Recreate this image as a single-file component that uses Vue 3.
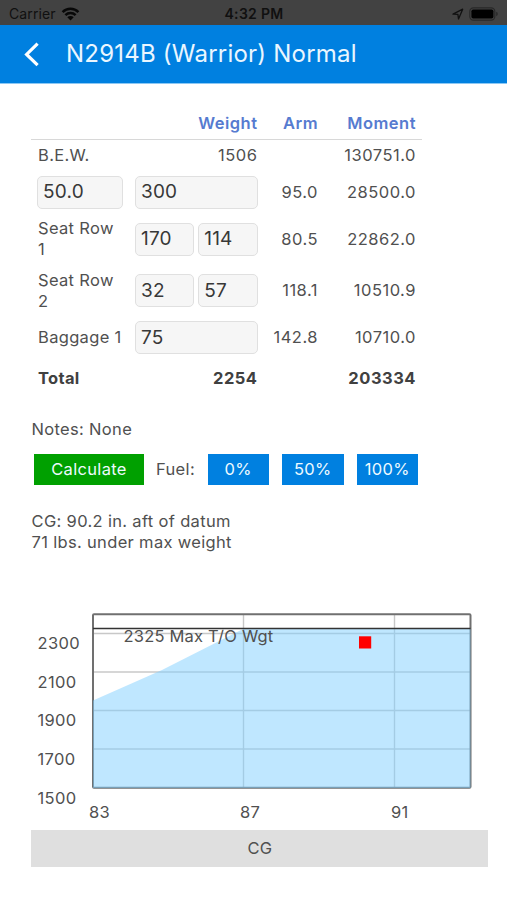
<script setup>
import { ref } from 'vue'

const rows = ref([
  { h: 42, label: '', fuel: '50.0', inputs: ['300'], arm: '95.0', moment: '28500.0' },
  { h: 52, label: 'Seat Row 1', inputs: ['170', '114'], arm: '80.5', moment: '22862.0' },
  { h: 51, label: 'Seat Row 2', inputs: ['32', '57'], arm: '118.1', moment: '10510.9' },
  { h: 43, label: 'Baggage 1', inputs: ['75'], arm: '142.8', moment: '10710.0' },
])
const fuelLevels = ['0%', '50%', '100%']
const weights = [
  { t: '2300', y: 49.2, grid: 33.5 },
  { t: '2100', y: 87.8, grid: 72 },
  { t: '1900', y: 126.4, grid: 110.5 },
  { t: '1700', y: 165, grid: 149 },
  { t: '1500', y: 203.6 },
]
const arms = [
  { t: '83', x: 58 },
  { t: '87', x: 209, grid: 212.5 },
  { t: '91', x: 360, grid: 363.5 },
]
</script>

<template>
  <div class="screen">
    <div class="status">
      <div class="carrier">
        <span>Carrier</span>
        <svg class="wifi" width="19" height="14" viewBox="0 0 19 14">
          <path d="M1.6 5.1a11.2 11.2 0 0 1 15.8 0" />
          <path d="M4.4 8.1a7.2 7.2 0 0 1 10.2 0" />
          <path class="solid" d="M6.3 10.3a4.6 4.6 0 0 1 6.4 0L9.5 13.5z" />
        </svg>
      </div>
      <span class="clock">4:32 PM</span>
      <div class="indicators">
        <svg width="12" height="12" viewBox="0 0 12 12">
          <path class="arrow" d="M1 6.2 10.7 1.2 6.5 11 5.9 6.4z" />
        </svg>
        <svg width="30" height="14" viewBox="0 0 30 14">
          <rect class="shell" x="0.8" y="0.8" width="25" height="12.4" rx="3.6" />
          <rect class="charge" x="2.4" y="2.4" width="22" height="9.2" rx="1.8" />
          <path class="cap" d="M27.2 4.8q1.6.6 1.6 2.2t-1.6 2.2z" />
        </svg>
      </div>
    </div>

    <header class="bar">
      <svg class="back" width="18" height="26" viewBox="0 0 18 26">
        <path d="M13.6 2.6 2.6 13.4 13.6 24.2" />
      </svg>
      <h1>N2914B (Warrior) Normal</h1>
    </header>

    <main>
      <div class="sheet">
        <div class="row head">
          <span></span><span class="num">Weight</span><span class="num">Arm</span><span class="num">Moment</span>
        </div>
        <div class="row bew">
          <span class="label">B.E.W.</span><span class="num">1506</span><span></span><span class="num">130751.0</span>
        </div>
        <div v-for="r in rows" :key="r.moment" class="row" :style="{ height: r.h + 'px' }">
          <input v-if="r.fuel" v-model="r.fuel" class="fuel" />
          <span v-else class="label">{{ r.label }}</span>
          <div class="fields">
            <input v-for="(v, i) in r.inputs" :key="i" v-model="r.inputs[i]" />
          </div>
          <span class="num">{{ r.arm }}</span>
          <span class="num">{{ r.moment }}</span>
        </div>
        <div class="row total">
          <span class="label">Total</span><span class="num">2254</span><span></span><span class="num">203334</span>
        </div>
      </div>

      <p class="notes">Notes: None</p>

      <div class="actions">
        <button class="calc">Calculate</button>
        <span class="fuel-label">Fuel:</span>
        <button v-for="f in fuelLevels" :key="f" class="level">{{ f }}</button>
      </div>

      <p class="result">CG: 90.2 in. aft of datum<br />71 lbs. under max weight</p>

      <svg class="chart" width="457" height="230" viewBox="0 0 457 230">
        <g class="grid">
          <template v-for="w in weights" :key="w.t">
            <path v-if="w.grid" :d="`M62 ${w.grid}H439.5`" />
          </template>
          <template v-for="a in arms" :key="a.t">
            <path v-if="a.grid" :d="`M${a.grid} 14V188`" />
          </template>
        </g>
        <rect class="frame" x="62" y="14.2" width="377.5" height="173.6" rx="1" />
        <path class="envelope" d="M62 100.5 131 70 212 29H439.5V188H62z" />
        <path class="limit" d="M62 28.5H439.5" />
        <text class="limit-text" x="92.5" y="42.4">2325 Max T/O Wgt</text>
        <rect class="point" x="328" y="36.3" width="12.2" height="12.2" />
        <text v-for="w in weights" :key="w.t" x="6.5" :y="w.y">{{ w.t }}</text>
        <text v-for="a in arms" :key="a.t" :x="a.x" y="218.2">{{ a.t }}</text>
      </svg>
      <div class="axis">CG</div>
    </main>
  </div>
</template>

<style>
body {
  background: #fff;
}
</style>

<style scoped>
.screen {
  width: 507px;
  height: 900px;
  overflow: hidden;
  background: #fff;
  color: #505050;
  font: 16.5px/21px Inter, "Liberation Sans", sans-serif;
  letter-spacing: 0.33px;
}
.status {
  box-sizing: border-box;
  height: 25px;
  padding: 2px 8px 0 9px;
  display: grid;
  grid-template-columns: 1fr auto 1fr;
  align-items: center;
  background: #424242;
  color: #101010;
  font-size: 14px;
}
.carrier,
.indicators {
  display: flex;
  align-items: center;
}
.carrier {
  gap: 5px;
  letter-spacing: 0.1px;
}
.wifi path {
  fill: none;
  stroke: #080808;
  stroke-width: 2.5;
}
.wifi .solid {
  fill: #080808;
  stroke: none;
}
.clock {
  font-weight: 600;
  letter-spacing: 0.3px;
}
.indicators {
  justify-content: flex-end;
  gap: 5px;
}
.arrow {
  fill: none;
  stroke: #111;
  stroke-width: 1.3;
  stroke-linejoin: round;
}
.shell {
  fill: none;
  stroke: #292929;
  stroke-width: 1.2;
}
.charge {
  fill: #000;
}
.cap {
  fill: #292929;
}
.bar {
  box-sizing: border-box;
  height: 59px;
  display: flex;
  align-items: center;
  gap: 24px;
  padding: 0 0 1px 24px;
  background: #0080e0;
  border-bottom: 1px solid #8cc8f4;
}
.back {
  fill: none;
  stroke: #fff;
  stroke-width: 3.2;
}
h1 {
  margin: 0;
  color: #eaf6ff;
  font-size: 24px;
  font-weight: 400;
  line-height: 30px;
  letter-spacing: 0.22px;
}
main {
  display: flex;
  flex-direction: column;
  align-items: flex-start;
  padding: 23px 0 0 31px;
}
p {
  margin: 0;
}
.sheet {
  width: 391px;
}
.row {
  box-sizing: border-box;
  display: grid;
  grid-template-columns: 86px 122.5px 48.5px 86px;
  column-gap: 12px;
  align-items: center;
  padding: 0 6px 0 6px;
}
.head {
  height: 33px;
  border-bottom: 1px solid #d8d8d8;
  color: #567bd0;
  font-weight: 600;
}
.bew {
  height: 31px;
}
.total {
  height: 39px;
  color: #404040;
  font-weight: 700;
}
.num {
  text-align: right;
  white-space: nowrap;
  letter-spacing: 0.5px;
}
.label {
  padding-left: 1px;
}
.fields {
  display: flex;
  gap: 4px;
}
input {
  box-sizing: border-box;
  flex: 1;
  min-width: 0;
  width: 100%;
  height: 33px;
  margin: 0;
  padding: 0 5px 1px;
  border: 1px solid #e0e0e0;
  border-radius: 5px;
  background: #f6f6f6;
  color: #383838;
  font: 19px Inter, "Liberation Sans", sans-serif;
  letter-spacing: 0.2px;
  outline: none;
}
.notes {
  margin: 20.5px 0 0 0.5px;
}
.actions {
  display: flex;
  align-items: center;
  height: 31px;
  margin: 14.5px 0 0 3px;
}
button {
  height: 31px;
  margin: 0;
  padding: 0;
  border: 0;
  color: #eefaff;
  font: inherit;
  letter-spacing: inherit;
}
.calc {
  width: 110px;
  background: #00a000;
}
.fuel-label {
  width: 51.5px;
  margin-left: 12px;
}
.level {
  width: 61.5px;
  margin-right: 13px;
  background: #0080e0;
}
.result {
  margin: 26px 0 0 0.5px;
}
.chart {
  display: block;
  margin-top: 47px;
}
.chart text {
  fill: #505050;
}
.chart .limit-text {
  letter-spacing: 0.2px;
}
.grid path {
  fill: none;
  stroke: #c8c8c8;
  stroke-width: 1.4;
}
.frame {
  fill: none;
  stroke: #707070;
  stroke-width: 2;
}
.limit {
  stroke: #333;
  stroke-width: 1.6;
}
.envelope {
  fill: #80d0ff;
  fill-opacity: 0.5;
}
.point {
  fill: #f00;
}
.axis {
  width: 457px;
  height: 37px;
  margin-left: 0.4px;
  background: #dfdfdf;
  line-height: 37px;
  text-align: center;
}
</style>
